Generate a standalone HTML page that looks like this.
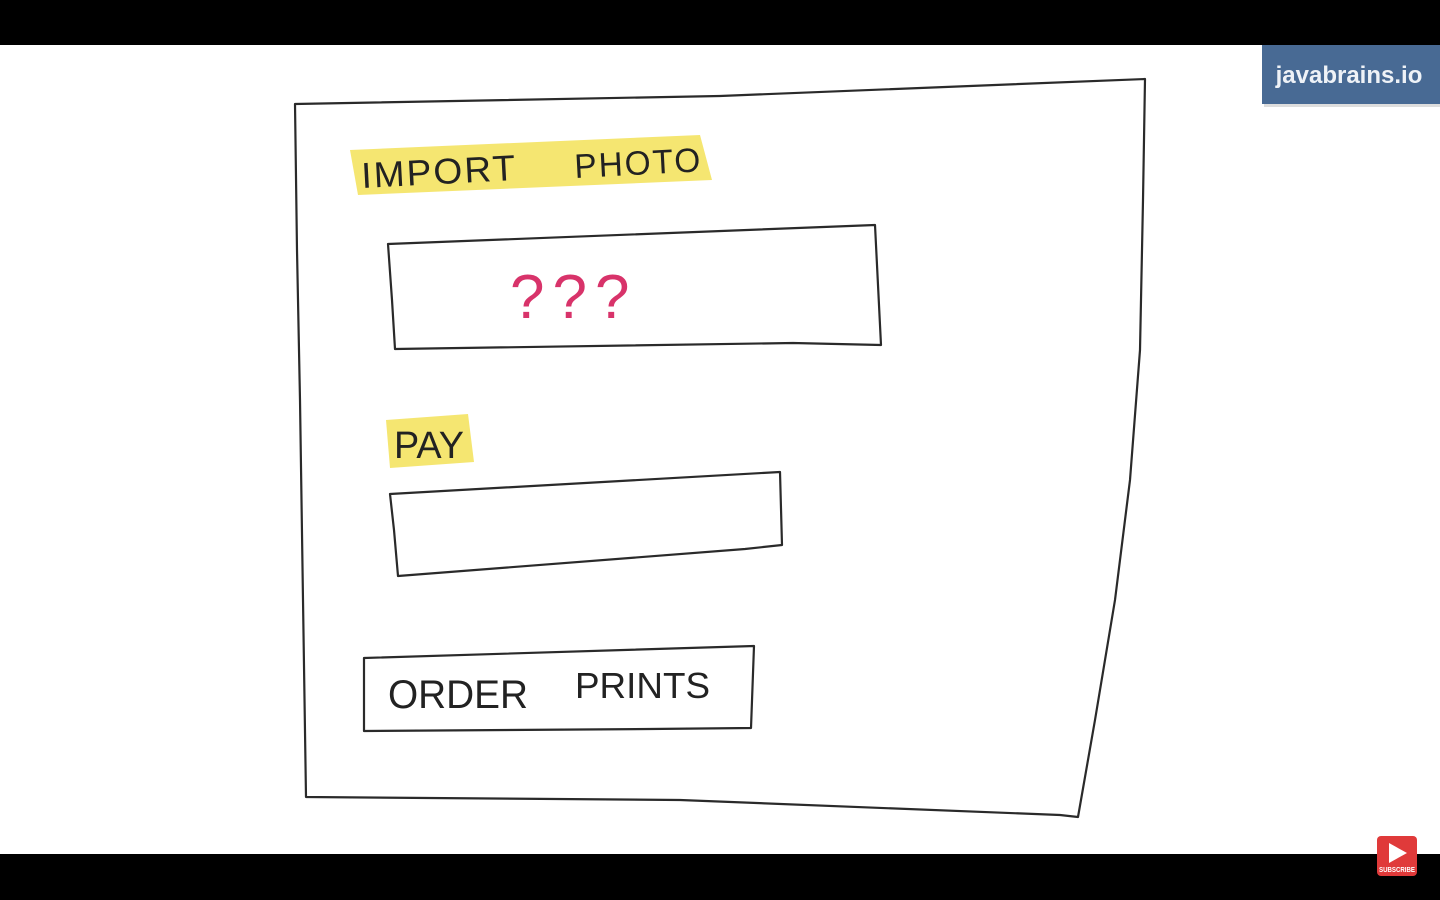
<!DOCTYPE html>
<html><head><meta charset="utf-8"><style>
html,body{margin:0;padding:0;width:1440px;height:900px;overflow:hidden;background:#fff}
</style></head><body>
<svg width="1440" height="900" xmlns="http://www.w3.org/2000/svg" style="position:absolute;left:0;top:0">
<rect x="0" y="0" width="1440" height="45" fill="#000"/>
<rect x="0" y="854" width="1440" height="46" fill="#000"/>
<rect x="1264" y="47" width="176" height="60" fill="#bbb" opacity="0.5"/>
<rect x="1262" y="45" width="178" height="59" fill="#486a94"/>
<text x="1349" y="83" text-anchor="middle" font-family="Liberation Sans, sans-serif" font-size="24" font-weight="bold" fill="#eef2f7">javabrains.io</text>
<path d="M350 150 L700 135 L712 180 L358 195 Z" fill="#f3e258" opacity="0.85"/>
<path d="M386 420 L468 414 L474 462 L390 468 Z" fill="#f3e258" opacity="0.85"/>
<g fill="none" stroke="#2a2a2a" stroke-width="2.2" stroke-linecap="round" stroke-linejoin="round">
<path d="M295 104 L720 96 L1145 79 L1143 200 L1140 350 L1130 480 L1115 600 L1095 720 L1078 817 L1060 815 L680 800 L306 797 L303 600 L300 400 L297 250 Z"/>
<path d="M388 244 L875 225 L881 345 L793 343 L395 349 L392 300 Z"/>
<path d="M390 494 L780 472 L782 545 L745 549 L398 576 L394 530 Z"/>
<path d="M364 658 L754 646 L751 728 L650 729 L364 731 Z"/>
</g>
<text x="362" y="188" font-family="Liberation Sans, sans-serif" font-size="36" fill="#222" transform="rotate(-3 362 188)" letter-spacing="2" textLength="156" lengthAdjust="spacingAndGlyphs">IMPORT</text>
<text x="575" y="178" font-family="Liberation Sans, sans-serif" font-size="34" fill="#222" transform="rotate(-3 575 178)" letter-spacing="2" textLength="128" lengthAdjust="spacingAndGlyphs">PHOTO</text>
<text x="510" y="318" font-family="Liberation Sans, sans-serif" font-size="62" fill="#d8336a" letter-spacing="8">???</text>
<text x="394" y="458" font-family="Liberation Sans, sans-serif" font-size="38" fill="#222" textLength="70" lengthAdjust="spacingAndGlyphs">PAY</text>
<text x="388" y="708" font-family="Liberation Sans, sans-serif" font-size="40" fill="#222" textLength="140" lengthAdjust="spacingAndGlyphs">ORDER</text>
<text x="575" y="698" font-family="Liberation Sans, sans-serif" font-size="36" fill="#222" textLength="135" lengthAdjust="spacingAndGlyphs">PRINTS</text>
<rect x="1377" y="836" width="40" height="40" rx="4" fill="#e03a3a"/>
<path d="M1389 843 L1407 853 L1389 863 Z" fill="#fff"/>
<text x="1397" y="872" text-anchor="middle" font-family="Liberation Sans, sans-serif" font-size="7" font-weight="bold" fill="#fff" textLength="36" lengthAdjust="spacingAndGlyphs">SUBSCRIBE</text>
</svg>
</body></html>
